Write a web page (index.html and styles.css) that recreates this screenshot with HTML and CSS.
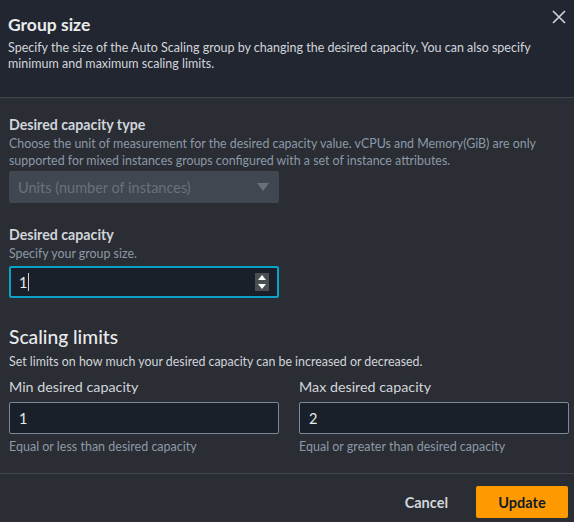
FILE: index.html
```html
<!DOCTYPE html>
<html>
<head>
<meta charset="utf-8">
<link rel="stylesheet" href="styles.css">
</head>
<body>
<div class="modal">
  <header class="head">
    <h1 class="title">Group size</h1>
    <p class="head-desc">Specify the size of the Auto Scaling group by changing the desired capacity. You can also specify minimum and maximum scaling limits.</p>
    <button class="close" aria-label="Close">
      <svg width="14" height="14" viewBox="0 0 14 14"><path d="M1 1L13 13M13 1L1 13" stroke="#d1d5db" stroke-width="1.6" fill="none"/></svg>
    </button>
  </header>
  <main class="body">
    <div class="field f-type">
      <div class="label">Desired capacity type</div>
      <div class="desc">Choose the unit of measurement for the desired capacity value. vCPUs and Memory(GiB) are only supported for mixed instances groups configured with a set of instance attributes.</div>
      <div class="select">
        <span>Units (number of instances)</span>
        <svg width="12" height="9" viewBox="0 0 12 9"><path d="M0 0H12L6 8Z" fill="#6a717b"/></svg>
      </div>
    </div>
    <div class="field f-cap">
      <div class="label">Desired capacity</div>
      <div class="desc">Specify your group size.</div>
      <div class="input focus">
        <span class="val">1</span><span class="caret"></span>
        <span class="spin">
          <svg width="12" height="18" viewBox="0 0 12 18"><path d="M2 7L6 2L10 7Z M2 11L6 16L10 11Z" fill="#ffffff"/></svg>
        </span>
      </div>
    </div>
    <section class="limits">
      <h2 class="h2">Scaling limits</h2>
      <div class="desc2">Set limits on how much your desired capacity can be increased or decreased.</div>
      <div class="cols">
        <div class="col">
          <div class="label2">Min desired capacity</div>
          <div class="input"><span class="val">1</span></div>
          <div class="hint">Equal or less than desired capacity</div>
        </div>
        <div class="col">
          <div class="label2">Max desired capacity</div>
          <div class="input"><span class="val">2</span></div>
          <div class="hint">Equal or greater than desired capacity</div>
        </div>
      </div>
    </section>
  </main>
  <footer class="foot">
    <button class="btn-cancel">Cancel</button>
    <button class="btn-primary">Update</button>
  </footer>
</div>
</body>
</html>
```
FILE: styles.css
```css
* { box-sizing: border-box; }
html, body { margin: 0; padding: 0; }
body {
  width: 574px;
  height: 522px;
  background: #2a2d33;
  font-family: Lato, "Open Sans", sans-serif;
  color: #d1d5db;
  overflow: hidden;
}
.modal { display: flex; flex-direction: column; height: 522px; }
.head {
  position: relative;
  background: #222630;
  border-bottom: 1px solid #414750;
  height: 98px;
  padding: 12px 30px 0 8px;
}
.title {
  margin: 0;
  font-size: 17.5px;
  font-weight: 700;
  line-height: 26px;
  color: #e9ebed;
}
.head-desc {
  margin: 2px 0 0;
  font-size: 12.5px;
  line-height: 16px;
  color: #d1d5db;
}
.close {
  position: absolute;
  top: 10px;
  right: 8px;
  background: none;
  border: 0;
  padding: 0;
  width: 14px;
  height: 14px;
  display: flex;
}
.body { flex: 1; padding: 17px 9px 0 9px; }
.field { display: flex; flex-direction: column; }
.label {
  font-size: 14.2px;
  font-weight: 700;
  line-height: 20px;
  color: #d1d5db;
}
.desc {
  font-size: 12.4px;
  line-height: 17px;
  color: #8d99a8;
}
.select {
  margin-top: 2px;
  width: 270px;
  height: 32px;
  background: #414750;
  border-radius: 2px;
  display: flex;
  align-items: center;
  justify-content: space-between;
  padding: 0 10px 0 9px;
  font-size: 14.5px;
  color: #6a717b;
}
.f-cap { margin-top: 22px; }
.f-cap .desc { margin-top: 0; }
.input {
  width: 270px;
  height: 32px;
  background: #1a2029;
  border: 1px solid #7d8998;
  border-radius: 2px;
  display: flex;
  align-items: center;
  padding: 0 9px;
  font-size: 14.5px;
  color: #e9ebed;
  position: relative;
}
.f-cap .input { margin-top: 4px; }
.input.focus { border: 2px solid #0aa1c9; padding-left: 8px; }
.caret { display: inline-block; width: 1px; height: 18px; background: #d1d5db; margin-left: 1px; }
.spin {
  position: absolute;
  right: 8px;
  top: 5px;
  width: 14px;
  height: 18px;
  background: #4a4d52;
  display: flex;
  align-items: center;
  justify-content: center;
}
.limits { margin-top: 27px; }
.h2 {
  margin: 0;
  font-size: 19.2px;
  font-weight: 500;
  line-height: 24px;
  color: #e9ebed;
}
.desc2 { font-size: 12.4px; line-height: 16px; color: #d1d5db; margin-top: 5px; }
.cols { display: grid; grid-template-columns: 270px 270px; column-gap: 20px; margin-top: 7px; }
.label2 { font-size: 14.3px; line-height: 20px; color: #d1d5db; }
.col .input { margin-top: 5px; width: 270px; }
.hint { font-size: 12.5px; line-height: 16px; color: #8d99a8; margin-top: 5px; }
.foot {
  border-top: 1px solid #414750;
  height: 49px;
  display: flex;
  justify-content: flex-end;
  align-items: center;
  padding: 12px 6px 4px 0;
  gap: 28px;
}
.btn-cancel {
  background: none;
  border: 0;
  font-family: inherit;
  font-size: 14.5px;
  font-weight: 700;
  color: #d1d5db;
  padding: 0;
}
.btn-primary {
  background: #ff9900;
  border: 0;
  border-radius: 2px;
  width: 92px;
  height: 32px;
  font-family: inherit;
  font-size: 14.5px;
  font-weight: 700;
  color: #0f1b2a;
}
```
